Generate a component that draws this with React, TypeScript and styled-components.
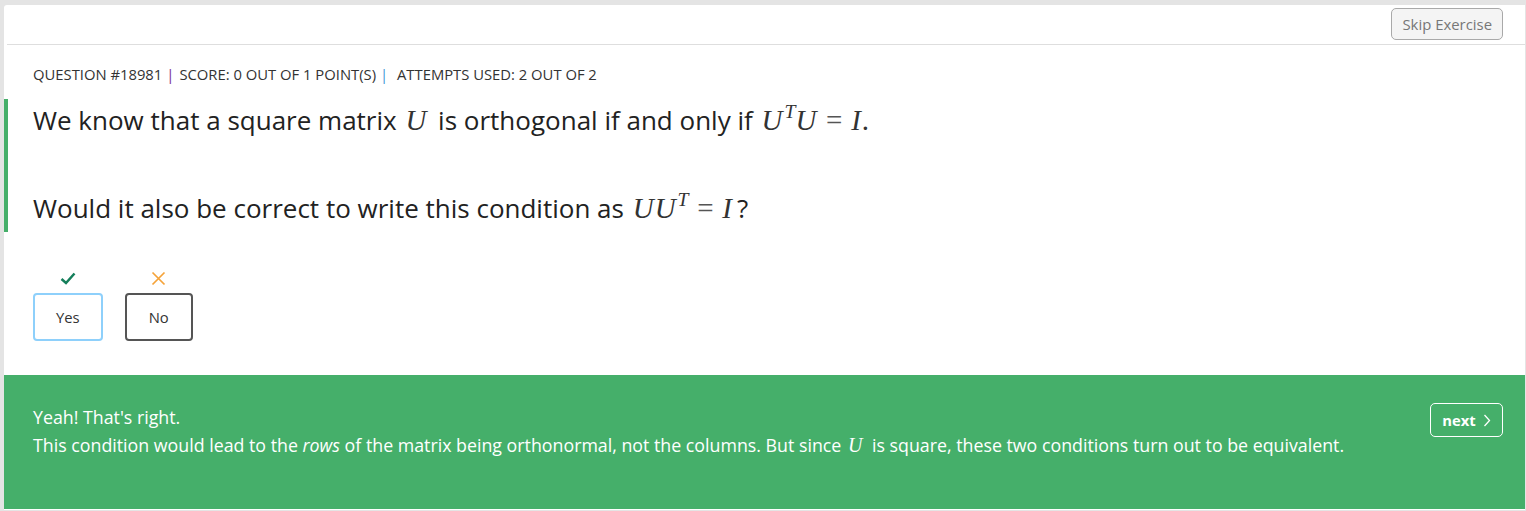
import React from "react";
import styled, { createGlobalStyle } from "styled-components";

const Global = createGlobalStyle`
  html, body { margin: 0; padding: 0; }
  body {
    background: #e4e4e4;
    font-family: "Open Sans", "Liberation Sans", sans-serif;
    color: #2b2b2b;
  }
`;

const Page = styled.div`
  padding: 5px 1px 1px 4px;
  height: 511px;
  box-sizing: border-box;
`;

const Card = styled.div`
  background: #fff;
  height: 100%;
  display: flex;
  flex-direction: column;
  border-top-left-radius: 3px;
`;

const TopBar = styled.div`
  height: 39px;
  margin-left: 3px;
  border-bottom: 1px solid #dedede;
  display: flex;
  align-items: flex-start;
  justify-content: flex-end;
  padding-right: 22px;
`;

const SkipButton = styled.button`
  font-family: "Open Sans", "Liberation Sans", sans-serif;
  font-size: 14.9px;
  color: #777;
  background: #f4f4f4;
  border: 1px solid #a9a9a9;
  border-radius: 5px;
  height: 32px;
  padding: 0 10px;
  margin-top: 3px;
`;

const Body = styled.div`
  flex: 1;
  display: flex;
  flex-direction: column;
`;

const Meta = styled.div`
  font-size: 14.8px;
  line-height: 20px;
  color: #333;
  padding: 19px 0 0 29px;
  text-transform: uppercase;
`;

const Sep = styled.span<{ $color: string }>`
  color: ${(p) => p.$color};
  margin: 0 5px 0 4px;
`;

const Question = styled.div`
  margin-top: 15px;
  border-left: 4px solid #46af6a;
  padding: 3px 0 6px 25px;
  font-size: 26px;
  line-height: 36px;
  color: #222;
`;

const QPara = styled.p<{ $gap?: number }>`
  margin: ${(p) => p.$gap ?? 0}px 0 0 0;
`;

const Math = styled.span<{ $size?: number; $color?: string }>`
  font-family: "Liberation Serif", "DejaVu Serif", serif;
  font-size: ${(p) => p.$size ?? 29}px;
  margin: 0 4px 0 2px;
  white-space: nowrap;
  color: ${(p) => p.$color ?? "#333"};
`;

const MI = styled.i`
  font-style: italic;
  letter-spacing: 1px;
`;

const Sup = styled.sup`
  font-size: 0.68em;
  font-style: italic;
  vertical-align: 0.6em;
  line-height: 0;
  margin-left: 1px;
`;

const Eq = styled.span`
  margin: 0 0.3em;
  color: #555;
`;

const Options = styled.div`
  display: flex;
  gap: 22px;
  padding: 38px 0 0 29px;
`;

const Option = styled.div`
  display: flex;
  flex-direction: column;
  align-items: center;
  gap: 7px;
`;

const IconSlot = styled.div`
  height: 16px;
  display: flex;
  align-items: center;
  justify-content: center;
`;

const Choice = styled.button<{ $border: string; $pad: number }>`
  font-family: "Open Sans", "Liberation Sans", sans-serif;
  font-size: 14.8px;
  color: #333;
  background: #fff;
  height: 48px;
  padding: 0 ${(p) => p.$pad}px;
  border: 2px solid ${(p) => p.$border};
  border-radius: 4px;
`;

const Footer = styled.div`
  background: #45af6a;
  margin-top: auto;
  height: 134px;
  box-sizing: border-box;
  padding: 28px 22px 0 29px;
  display: flex;
  justify-content: space-between;
  align-items: flex-start;
  color: #fff;
  margin-bottom: 1px;
`;

const FooterText = styled.div`
  font-size: 17.8px;
  line-height: 28px;
`;

const NextButton = styled.button`
  font-family: "Open Sans", "Liberation Sans", sans-serif;
  font-weight: 700;
  font-size: 14.8px;
  color: #fff;
  background: transparent;
  border: 1px solid #fff;
  border-radius: 5px;
  height: 34px;
  width: 73px;
  display: flex;
  align-items: center;
  justify-content: center;
  gap: 7px;
  padding: 0;
  flex-shrink: 0;
`;

const Check = () => (
  <svg width="16" height="13" viewBox="0 0 16 13">
    <path d="M1.5 7 L6 11 L14.5 1.5" fill="none" stroke="#157f5b" strokeWidth="2.5" />
  </svg>
);

const Cross = () => (
  <svg width="15" height="15" viewBox="0 0 15 15">
    <path d="M1.5 1.5 L13.5 13.5 M13.5 1.5 L1.5 13.5" fill="none" stroke="#f5a33a" strokeWidth="1.7" />
  </svg>
);

const Chevron = () => (
  <svg width="8" height="13" viewBox="0 0 8 13">
    <path d="M1.5 1 L6.5 6.5 L1.5 12" fill="none" stroke="#fff" strokeWidth="1.3" />
  </svg>
);

export default function App() {
  return (
    <>
      <Global />
      <Page>
        <Card>
          <TopBar>
            <SkipButton>Skip Exercise</SkipButton>
          </TopBar>
          <Body>
            <Meta>
              Question #18981<Sep $color="#7b2a8f">|</Sep>Score: 0 out of 1 point(s)
              <Sep $color="#3f95d6">|</Sep> Attempts used: 2 out of 2
            </Meta>
            <Question>
              <QPara>
                We know that a square matrix <Math><MI>U</MI></Math> is orthogonal if and only if{" "}
                <Math>
                  <MI>U</MI>
                  <Sup>T</Sup>
                  <MI>U</MI>
                  <Eq>=</Eq>
                  <MI>I</MI>.
                </Math>
              </QPara>
              <QPara $gap={52}>
                Would it also be correct to write this condition as{" "}
                <Math>
                  <MI>UU</MI>
                  <Sup>T</Sup>
                  <Eq>=</Eq>
                  <MI>I</MI>
                </Math>
                ?
              </QPara>
            </Question>
            <Options>
              <Option>
                <IconSlot>
                  <Check />
                </IconSlot>
                <Choice $border="#8ed0fb" $pad={21}>Yes</Choice>
              </Option>
              <Option>
                <IconSlot>
                  <Cross />
                </IconSlot>
                <Choice $border="#555" $pad={22}>No</Choice>
              </Option>
            </Options>
            <Footer>
              <FooterText>
                Yeah! That's right.
                <br />
                This condition would lead to the <i>rows</i> of the matrix being orthonormal, not the
                columns. But since <Math $size={20} $color="#fff"><MI>U</MI></Math> is square, these two conditions turn out to be
                equivalent.
              </FooterText>
              <NextButton>
                next <Chevron />
              </NextButton>
            </Footer>
          </Body>
        </Card>
      </Page>
    </>
  );
}
